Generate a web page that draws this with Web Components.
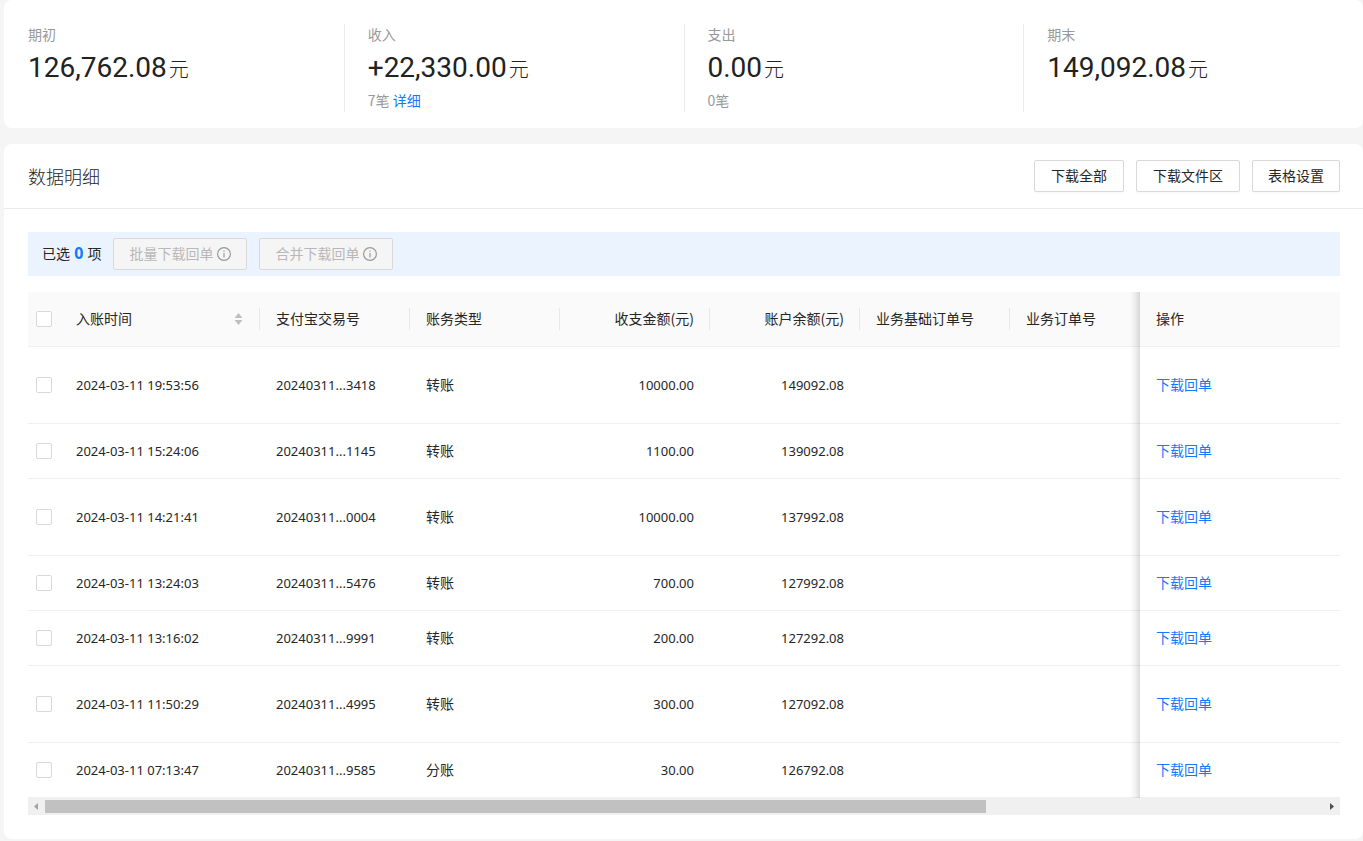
<!DOCTYPE html>
<html lang="zh-CN">
<head>
<meta charset="utf-8">
<meta name="viewport" content="width=device-width, initial-scale=1">
<title>数据明细</title>
<style>
  :root {
    --text: #262626;
    --muted: #999;
    --link: #1677ff;
    --line: #f0f0f0;
    --border: #d9d9d9;
    --number-font: "Noto Sans", "Open Sans", sans-serif;
  }
  body {
    margin: 0;
    background: #f5f5f5;
    color: var(--text);
    font: 14px/22px "Noto Sans CJK SC", sans-serif;
  }
</style>
</head>
<body>
<bill-page></bill-page>

<template id="bill-page">
  <style>
    :host { display: flex; flex-direction: column; gap: 16px; padding: 0 0 2px 4px; }
  </style>
  <stat-row>
    <stat-item label="期初" value="126,762.08"></stat-item>
    <stat-item label="收入" value="+22,330.00">7笔 <text-link>详细</text-link></stat-item>
    <stat-item label="支出" value="0.00">0笔</stat-item>
    <stat-item label="期末" value="149,092.08"></stat-item>
  </stat-row>
  <detail-panel heading="数据明细">
    <ui-button slot="actions">下载全部</ui-button>
    <ui-button slot="actions">下载文件区</ui-button>
    <ui-button slot="actions" compact>表格设置</ui-button>
    <batch-bar count="0">
      <ui-button disabled compact>批量下载回单<info-icon></info-icon></ui-button>
      <ui-button disabled compact>合并下载回单<info-icon></info-icon></ui-button>
    </batch-bar>
    <bill-table></bill-table>
  </detail-panel>
</template>

<template id="stat-row">
  <style>
    :host { display: flex; padding: 24px 0 16px; border-radius: 8px; background: #fff; }
  </style>
  <slot></slot>
</template>

<template id="stat-item">
  <style>
    :host { display: block; flex: 1; min-width: 0; height: 88px; box-sizing: border-box; padding-left: 23px; border-left: 1px solid #ebebeb; }
    :host(:first-child) { border-color: transparent; }
    .label, .note { color: var(--muted); line-height: 20px; }
    .value { display: flex; align-items: baseline; gap: 2px; height: 46px; color: #222; font: 28px/48px Roboto, sans-serif; white-space: nowrap; }
    .unit { font: 300 20px/44px "Noto Sans CJK SC", sans-serif; }
  </style>
  <div class="label"></div>
  <div class="value"><span class="number"></span><span class="unit">元</span></div>
  <div class="note"><slot></slot></div>
</template>

<template id="text-link">
  <style>
    :host { display: inline; }
    a { color: var(--link); text-decoration: none; }
  </style>
  <a href="#"><slot></slot></a>
</template>

<template id="info-icon">
  <style>
    :host { display: block; width: 14px; height: 14px; margin-left: 4px; }
    svg { display: block; }
  </style>
  <svg width="14" height="14" viewBox="0 0 14 14" fill="none" stroke="#9a9a9a" aria-hidden="true">
    <circle cx="7" cy="7" r="6.4" stroke-width="1.2"/>
    <path d="M7 6v4.5M7 3.4v1.3" stroke-width="1.2"/>
  </svg>
</template>

<template id="ui-button">
  <style>
    :host { display: block; }
    button {
      display: flex; align-items: center; justify-content: center;
      box-sizing: border-box; height: 32px; margin: 0; padding: 0 16px 2px;
      border: 1px solid var(--border); border-radius: 2px; background: #fff;
      box-shadow: 0 2px 0 rgba(0, 0, 0, .02);
      color: inherit; font: inherit; white-space: nowrap; cursor: pointer;
    }
    :host([compact]) button { padding: 0 15px 2px; }
    ::slotted(info-icon) { margin-top: 2px; }
    button:disabled { background: #f5f5f5; box-shadow: none; color: #b8b8b8; cursor: not-allowed; }
  </style>
  <button type="button"><slot></slot></button>
</template>

<template id="detail-panel">
  <style>
    :host { display: block; border-radius: 8px; background: #fff; }
    header { display: flex; align-items: center; gap: 12px; padding: 16px 23px 16px 24px; border-bottom: 1px solid #ebebeb; }
    h2 { flex: 1; margin: 0; font-size: 18px; line-height: 28px; font-weight: 300; }
    .body { display: flex; flex-direction: column; gap: 16px; padding: 23px 23px 24px 24px; }
  </style>
  <header><h2></h2><slot name="actions"></slot></header>
  <div class="body"><slot></slot></div>
</template>

<template id="batch-bar">
  <style>
    :host { display: flex; align-items: center; gap: 12px; padding: 6px 14px; background: #ebf3ff; }
    b { margin: 0 1px; color: var(--link); font: 700 16px/20px var(--number-font); }
    span { padding-bottom: 2px; white-space: nowrap; }
  </style>
  <span>已选 <b></b> 项</span>
  <slot></slot>
</template>

<template id="bill-table">
  <style>
    :host { display: block; min-width: 0; }
    .scroller { overflow-x: auto; scrollbar-width: none; }
    .scroller::-webkit-scrollbar { display: none; }
    table { width: 1782px; min-width: 100%; table-layout: fixed; border-collapse: separate; border-spacing: 0; }
    .c-check { width: 32px; }
    .c-time { width: 200px; }
    .c-cell { width: 150px; }
    .c-action { width: 200px; }
    th, td { box-sizing: border-box; padding: 0 16px; border-bottom: 1px solid var(--line); text-align: left; font-weight: 400; white-space: nowrap; }
    th { height: 55px; padding-right: 0; background: #fafafa; }
    td { height: 55px; padding-bottom: 2px; background: #fff; }
    tr.tall td { height: 77px; }
    th:first-child, td:first-child { padding: 0 8px; }
    td.num { padding-bottom: 0; font: 13px/22px var(--number-font); }
    .right { text-align: right; }
    .head { display: flex; justify-content: space-between; height: 22px; padding-right: 16px; border-right: 1px solid #e8e8e8; line-height: 20px; }
    .head.right { justify-content: flex-end; padding-right: 15px; }
    .head.last { border: 0; }
    .head svg { align-self: center; }
    .fixed { position: sticky; right: 0; }
    .fixed::before {
      content: ""; position: absolute; top: 0; bottom: -1px; right: 100%; width: 10px;
      background: linear-gradient(to left, rgba(0, 0, 0, .14), rgba(0, 0, 0, .05) 50%, transparent);
      pointer-events: none;
    }
    input { appearance: none; display: block; width: 16px; height: 16px; margin: 0; box-sizing: border-box; border: 1px solid var(--border); border-radius: 2px; background: #fff; }
    input:checked { background: var(--link); border-color: var(--link); }
    svg { display: block; }
    .bar { display: flex; align-items: center; height: 17px; background: #f0f0f0; }
    .bar svg { flex: none; }
    .track { flex: 1; }
    .thumb { width: 73.6%; height: 13px; background: #c1c1c1; }
  </style>
  <div class="scroller">
    <table>
      <colgroup>
        <col class="c-check"><col class="c-time">
        <col class="c-cell"><col class="c-cell"><col class="c-cell"><col class="c-cell"><col class="c-cell"><col class="c-cell">
        <col class="c-cell"><col class="c-cell"><col class="c-cell"><col class="c-action">
      </colgroup>
      <thead>
        <tr>
          <th><input type="checkbox" aria-label="全选"></th>
          <th><div class="head">入账时间
            <svg width="9" height="12" viewBox="0 0 9 12" fill="#bfbfbf" aria-hidden="true"><path d="M4.5 0 8.5 5h-8zM4.5 12 .5 7h8z"/></svg>
          </div></th>
          <th><div class="head">支付宝交易号</div></th>
          <th><div class="head">账务类型</div></th>
          <th><div class="head right">收支金额(元)</div></th>
          <th><div class="head right">账户余额(元)</div></th>
          <th><div class="head">业务基础订单号</div></th>
          <th><div class="head">业务订单号</div></th>
          <th></th><th></th><th></th>
          <th class="fixed"><div class="head last">操作</div></th>
        </tr>
      </thead>
      <tbody></tbody>
    </table>
  </div>
  <div class="bar">
    <svg width="17" height="17" viewBox="0 0 17 17" aria-hidden="true"><path d="M10 5v7L6 8.500z" fill="#a3a3a3"/></svg>
    <div class="track"><div class="thumb"></div></div>
    <svg width="17" height="17" viewBox="0 0 17 17" aria-hidden="true"><path d="M7 5v7l4-3.500z" fill="#505050"/></svg>
  </div>
</template>

<script>
  class TemplateElement extends HTMLElement {
    constructor() {
      super();
      const template = document.getElementById(this.localName);
      this.attachShadow({ mode: 'open' }).append(template.content.cloneNode(true));
    }
    find(selector) { return this.shadowRoot.querySelector(selector); }
  }

  class StatItem extends TemplateElement {
    connectedCallback() {
      this.find('.label').textContent = this.getAttribute('label');
      this.find('.number').textContent = this.getAttribute('value');
    }
  }

  class UiButton extends TemplateElement {
    connectedCallback() { this.find('button').disabled = this.hasAttribute('disabled'); }
  }

  class DetailPanel extends TemplateElement {
    connectedCallback() { this.find('h2').textContent = this.getAttribute('heading'); }
  }

  class BatchBar extends TemplateElement {
    connectedCallback() { this.find('b').textContent = this.getAttribute('count'); }
  }

  const BILLS = [
    ['2024-03-11 19:53:56', '20240311...3418', '转账', '10000.00', '149092.08', true],
    ['2024-03-11 15:24:06', '20240311...1145', '转账', '1100.00', '139092.08', false],
    ['2024-03-11 14:21:41', '20240311...0004', '转账', '10000.00', '137992.08', true],
    ['2024-03-11 13:24:03', '20240311...5476', '转账', '700.00', '127992.08', false],
    ['2024-03-11 13:16:02', '20240311...9991', '转账', '200.00', '127292.08', false],
    ['2024-03-11 11:50:29', '20240311...4995', '转账', '300.00', '127092.08', true],
    ['2024-03-11 07:13:47', '20240311...9585', '分账', '30.00', '126792.08', false]
  ];

  class BillTable extends TemplateElement {
    connectedCallback() {
      this.find('tbody').innerHTML = BILLS.map(([time, id, type, amount, balance, tall]) => `
        <tr${tall ? ' class="tall"' : ''}>
          <td><input type="checkbox" aria-label="${time}"></td>
          <td class="num">${time}</td>
          <td class="num">${id}</td>
          <td>${type}</td>
          <td class="num right">${amount}</td>
          <td class="num right">${balance}</td>
          <td></td><td></td><td></td><td></td><td></td>
          <td class="fixed"><text-link>下载回单</text-link></td>
        </tr>`).join('');
      const scroller = this.find('.scroller');
      const thumb = this.find('.thumb');
      scroller.addEventListener('scroll', () => {
        thumb.style.marginLeft = `${scroller.scrollLeft / scroller.scrollWidth * 100}%`;
      });
    }
  }

  customElements.define('text-link', class extends TemplateElement {});
  customElements.define('info-icon', class extends TemplateElement {});
  customElements.define('ui-button', UiButton);
  customElements.define('stat-item', StatItem);
  customElements.define('stat-row', class extends TemplateElement {});
  customElements.define('batch-bar', BatchBar);
  customElements.define('bill-table', BillTable);
  customElements.define('detail-panel', DetailPanel);
  customElements.define('bill-page', class extends TemplateElement {});
</script>
</body>
</html>
